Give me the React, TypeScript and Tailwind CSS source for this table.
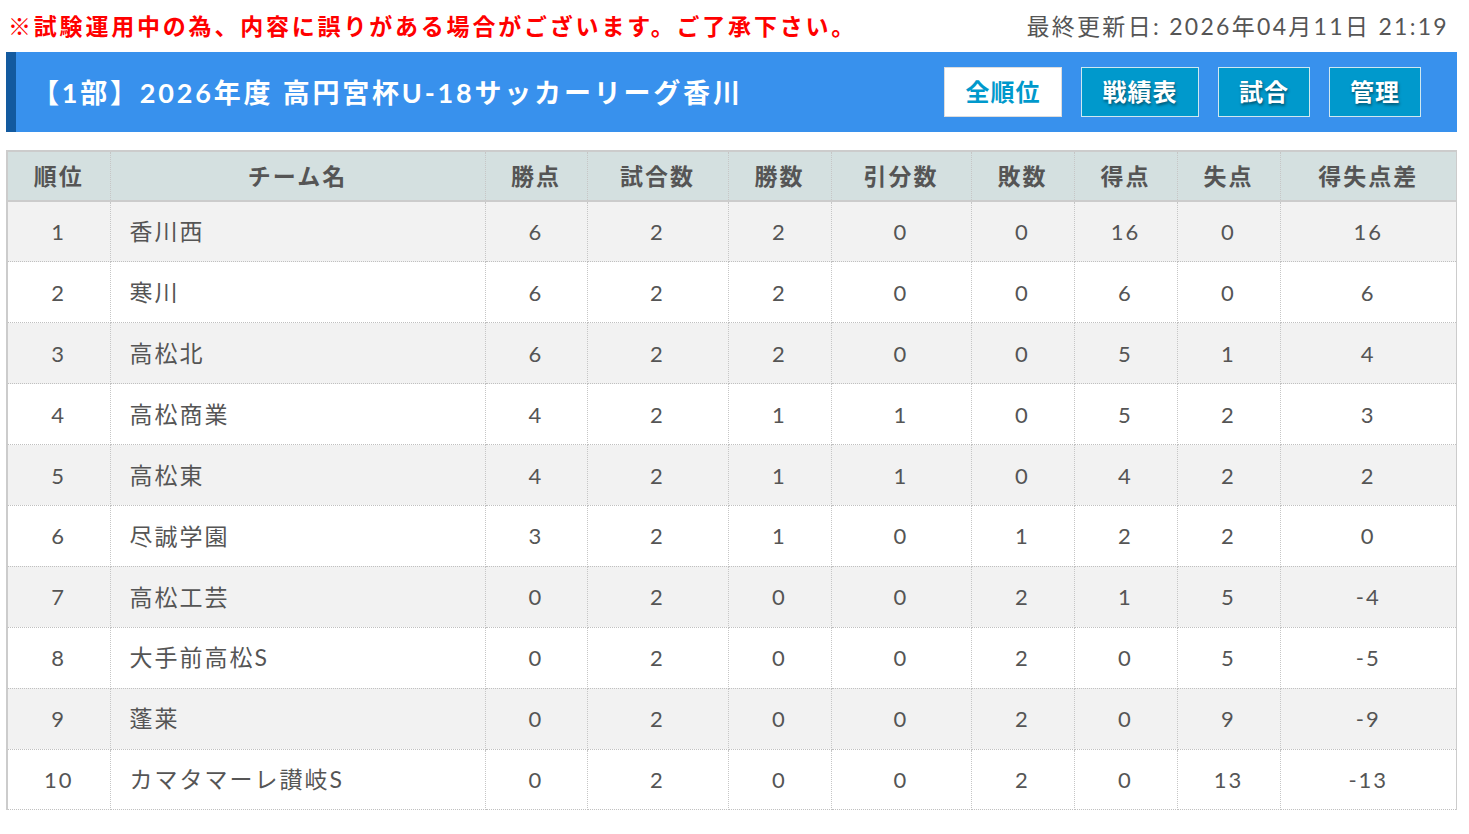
import React from "react";

const rows: [string, string, number, number, number, number, number, number, number, number][] = [
  ["1", "香川西", 6, 2, 2, 0, 0, 16, 0, 16],
  ["2", "寒川", 6, 2, 2, 0, 0, 6, 0, 6],
  ["3", "高松北", 6, 2, 2, 0, 0, 5, 1, 4],
  ["4", "高松商業", 4, 2, 1, 1, 0, 5, 2, 3],
  ["5", "高松東", 4, 2, 1, 1, 0, 4, 2, 2],
  ["6", "尽誠学園", 3, 2, 1, 0, 1, 2, 2, 0],
  ["7", "高松工芸", 0, 2, 0, 0, 2, 1, 5, -4],
  ["8", "大手前高松S", 0, 2, 0, 0, 2, 0, 5, -5],
  ["9", "蓬莱", 0, 2, 0, 0, 2, 0, 9, -9],
  ["10", "カマタマーレ讃岐S", 0, 2, 0, 0, 2, 0, 13, -13],
];

const headers = ["順位", "チーム名", "勝点", "試合数", "勝数", "引分数", "敗数", "得点", "失点", "得失点差"];
const widths = [102, 375, 102, 141, 103, 140, 103, 103, 103, 176];

export default function App() {
  return (
    <div
      className="min-h-[834px] bg-white text-[#555]"
      style={{ fontFamily: "Lato, 'Noto Sans CJK JP', sans-serif" }}
    >
      <div className="flex items-center justify-between h-[52px] pl-[8px] pr-[20px]">
        <div className="text-[23px] font-bold text-[#ff0000] tracking-[2.8px] leading-none">
          ※試験運用中の為、内容に誤りがある場合がございます。ご了承下さい。
        </div>
        <div className="text-[23px] tracking-[2.3px] leading-none text-[#555]">
          最終更新日: 2026年04月11日 21:19
        </div>
      </div>

      <div className="ml-[6px] w-[1451px] h-[80px] flex items-stretch bg-[#3891ed]">
        <div className="w-[10px] bg-[#135a9f]" />
        <div className="flex-1 flex items-center justify-between pl-[16px] pr-[36px]">
          <div className="text-white font-bold text-[27px] tracking-[2.8px] leading-none">
            【1部】2026年度 高円宮杯U-18サッカーリーグ香川
          </div>
          <div className="flex gap-[19px]">
            <div className="w-[118px] h-[50px] flex items-center justify-center bg-white border border-[#ddd] text-[#0099cc] font-bold text-[24px] tracking-[1px]">
              全順位
            </div>
            <div className="w-[118px] h-[50px] flex items-center justify-center bg-[#0099cc] border border-[#cfe8f0] text-white font-bold text-[24px] tracking-[1px] [text-shadow:1px_2px_3px_rgba(0,0,0,0.45)]">
              戦績表
            </div>
            <div className="w-[92px] h-[50px] flex items-center justify-center bg-[#0099cc] border border-[#cfe8f0] text-white font-bold text-[24px] tracking-[1px] [text-shadow:1px_2px_3px_rgba(0,0,0,0.45)]">
              試合
            </div>
            <div className="w-[92px] h-[50px] flex items-center justify-center bg-[#0099cc] border border-[#cfe8f0] text-white font-bold text-[24px] tracking-[1px] [text-shadow:1px_2px_3px_rgba(0,0,0,0.45)]">
              管理
            </div>
          </div>
        </div>
      </div>

      <div className="ml-[6px] mt-[18px] w-[1451px] border-l-2 border-r-2 border-t-2 border-[#cccccc]">
        <table className="w-full table-fixed border-collapse">
          <colgroup>
            {widths.map((w, i) => (
              <col key={i} style={{ width: w }} />
            ))}
          </colgroup>
          <thead>
            <tr className="bg-[#d4e0e0] h-[49px]">
              {headers.map((h, i) => (
                <th
                  key={i}
                  className={`font-bold text-[23px] tracking-[2px] text-center text-[#555] border-b-2 border-b-[#cccccc] border-solid ${
                    i < headers.length - 1 ? "border-r border-r-[#c6c6c6]" : ""
                  }`}
                  style={i < headers.length - 1 ? { borderRightStyle: "dotted", borderBottomStyle: "solid" } : { borderBottomStyle: "solid" }}
                >
                  {h}
                </th>
              ))}
            </tr>
          </thead>
          <tbody>
            {rows.map((r, ri) => (
              <tr key={ri} className={`h-[60.9px] ${ri % 2 === 0 ? "bg-[#f2f2f2]" : "bg-white"}`}>
                {r.map((c, ci) => (
                  <td
                    key={ci}
                    className={`tracking-[2px] text-[#555] border-b border-dotted border-b-[#c0c0c0] ${
                      ci < r.length - 1 ? "border-r border-r-[#c6c6c6]" : ""
                    } ${ci === 1 ? "text-left pl-[19px] text-[23px]" : "text-center text-[22px]"}`}
                  >
                    {c}
                  </td>
                ))}
              </tr>
            ))}
          </tbody>
        </table>
      </div>
    </div>
  );
}
